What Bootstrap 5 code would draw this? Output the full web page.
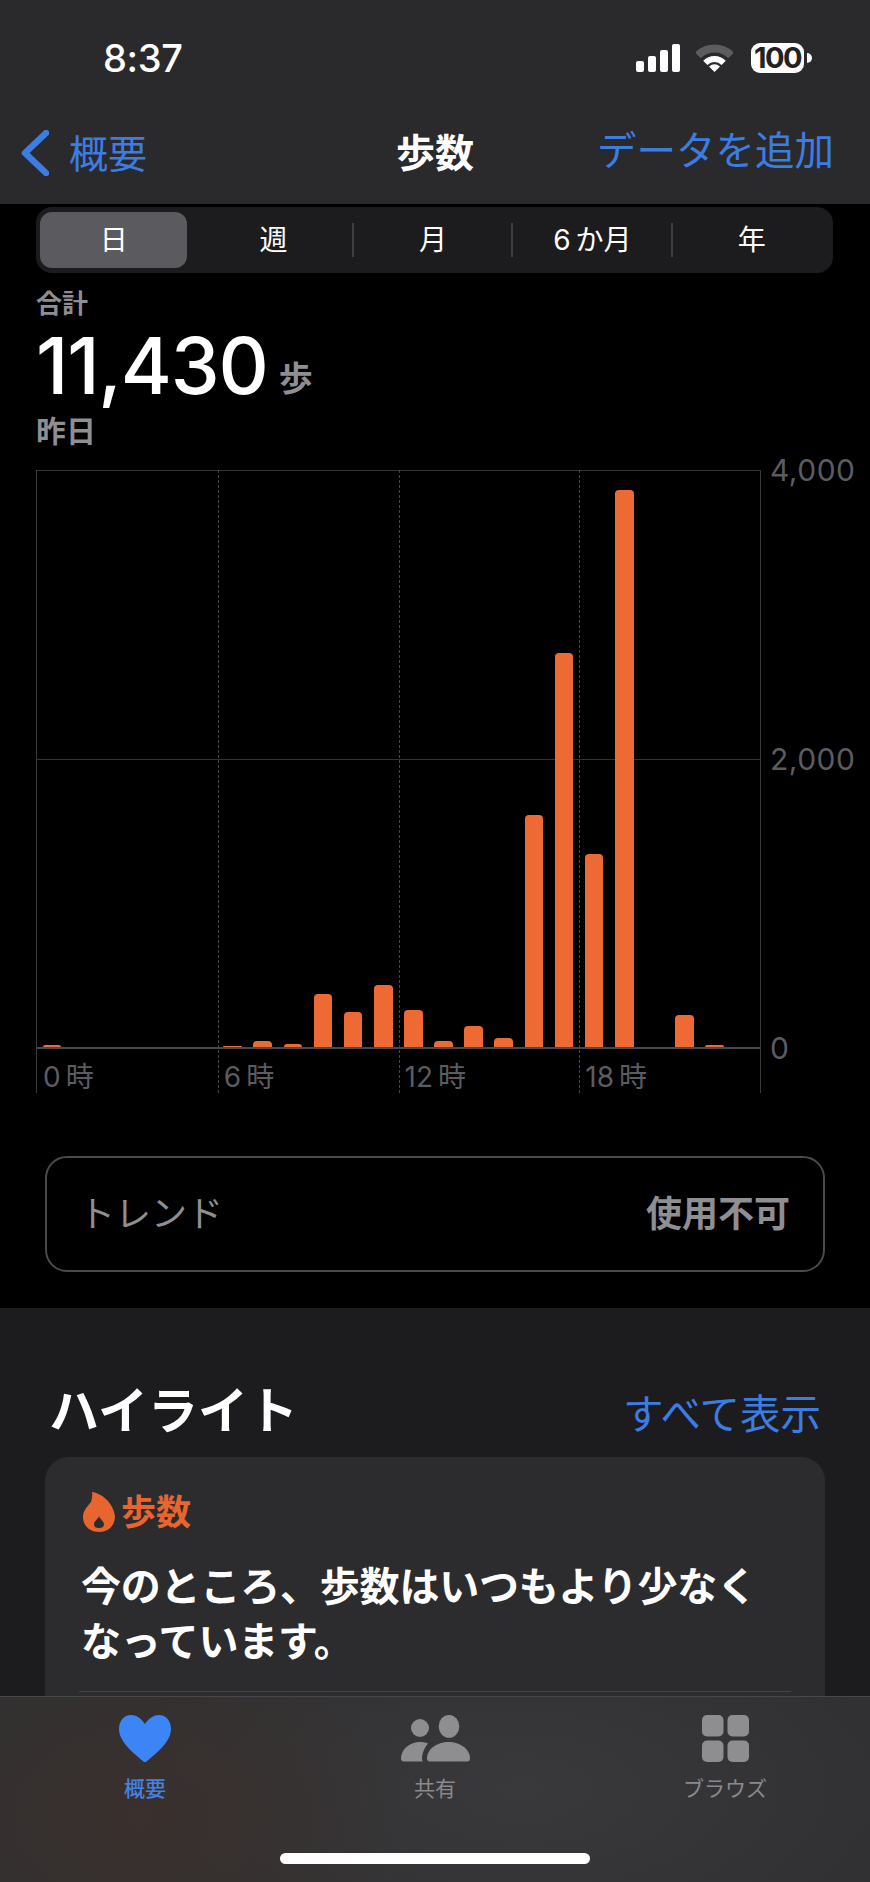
<!DOCTYPE html>
<html lang="ja">
<head>
    <meta charset="UTF-8">
    <meta name="viewport" content="width=device-width, initial-scale=1.0">
    <title>歩数</title>
    <link rel="stylesheet" href="https://cdn.jsdelivr.net/npm/bootstrap@5.3.0/dist/css/bootstrap.min.css">
    <style>
        body { background: #000; font-family: Inter, "Noto Sans CJK JP", sans-serif; color: #fff; }
        .screen { width: 870px; height: 1882px; overflow: hidden; position: relative; background: #000; }

        .top-bar { height: 204px; background: #2a2a2c; }
        .status-row { height: 116px; padding: 0 66px 0 103px; }
        .clock { font-size: 38px; font-weight: 500; letter-spacing: -.3px; line-height: 1; }
        .signal-icon { width: 44px; height: 28px; margin-right: 16px; }
        .wifi-icon { width: 37px; height: 28px; margin-right: 18px; }
        .battery { width: 53px; height: 30px; border-radius: 9px; background: #fff; color: #222; font-size: 29px; font-weight: 700; letter-spacing: -1.5px; line-height: 30px; text-align: center; position: relative; }
        .battery::after { content: ""; position: absolute; right: -8px; top: 10px; width: 5px; height: 10px; background: #fff; border-radius: 0 5px 5px 0; }
        .nav-row { height: 74px; padding: 0 36px 0 20px; position: relative; }
        .nav-back { font-size: 39px; line-height: 1; gap: 20px; color: #3b7de3; }
        .nav-title { position: absolute; left: 0; right: 0; text-align: center; font-size: 39px; font-weight: 700; line-height: 72px; }
        .nav-add { font-size: 39.5px; line-height: 1; color: #3b7de3; position: relative; margin-top: -2px; }

        .segments { margin: 3px 37px 0 36px; height: 66px; border-radius: 16px; background: #1c1c1e; display: grid; grid-template-columns: repeat(5, 1fr); padding: 5px 0; }
        .seg-item { font-size: 28px; line-height: 56px; text-align: center; padding-right: 3px; }
        .seg-item.on { background: #5b5b5f; border-radius: 12px; margin: 0 8px 0 4px; padding: 0; }
        .seg-item.sep { margin-left: -3px; padding-right: 0; background: linear-gradient(#3f3f42, #3f3f42) left center / 2px 34px no-repeat; }

        .summary { padding-left: 36px; }
        .sum-label { margin-top: 16px; font-size: 26px; line-height: 30px; font-weight: 700; color: #8e8e93; }
        .sum-value { font-size: 78px; line-height: 76px; font-weight: 500; letter-spacing: -1.2px; gap: 11px; margin: 9px 0 10px; }
        .sum-unit { font-size: 34px; font-weight: 700; color: #8e8e93; line-height: 1; margin-bottom: 8px; }
        .sum-date { font-size: 30px; line-height: 34px; font-weight: 700; color: #8e8e93; }

        .chart-wrap { margin: 22px 0 0 36px; }
        .plot { width: 725px; position: relative; border: solid #3a3a3c; border-width: 0 1px 0 1px; }
        .plot-area { height: 579px; display: grid; grid-template-columns: repeat(24, 1fr); align-items: end; border-top: 1px solid #333336; border-bottom: 2px solid #48484a; position: relative; }
        .bar-cell { padding: 0 6px 0 5.5px; display: flex; align-items: flex-end; height: 100%; }
        .bar { width: 100%; background: #ee6a34; border-radius: 4px 4px 0 0; position: relative; }
        .mid-line { position: absolute; left: 0; right: 0; top: 288px; border-top: 1px solid #333336; }
        .hour-lines { position: absolute; inset: 0; display: grid; grid-template-columns: repeat(4, 1fr); pointer-events: none; }
        .hour-lines div + div { border-left: 1px dashed #48484a; }
        .hour-labels { height: 44px; display: grid; grid-template-columns: repeat(4, 1fr); }
        .hour-labels div { font-size: 28px; line-height: 44px; padding: 6px 0 0 6px; color: #5c5c60; }
        .y-labels { height: 612px; margin-top: -17px; padding-left: 9px; font-size: 30px; letter-spacing: .5px; line-height: 34px; color: #5c5c60; }

        .trend-card { --bs-card-bg: transparent; --bs-card-border-color: #4a4a4c; --bs-card-border-width: 2px; --bs-card-border-radius: 22px; margin: 63px 45px 0 45px; height: 116px; padding: 0 33px 0 32px; }
        .trend-name { font-size: 36px; color: #8e8e93; font-weight: 400; }
        .trend-val { font-size: 36px; color: #8e8e93; font-weight: 700; }

        .lower { margin-top: 36px; height: 600px; background: #1c1c1e; padding: 73px 45px 0; }
        .lower-title { font-size: 50px; font-weight: 700; line-height: 60px; margin-left: 4px; }
        .lower-link { font-size: 40.5px; line-height: 60px; color: #3b7de3; margin: 4px 4px -4px 0; }
        .highlight-card { --bs-card-bg: #2c2c2e; --bs-card-border-width: 0; --bs-card-border-radius: 24px; margin-top: 16px; height: 300px; padding: 35px 36px 0; }
        .hl-head { gap: 6px; color: #e8652f; font-size: 35px; font-weight: 700; line-height: 40px; }
        .flame { width: 32px; height: 40px; margin-left: 2px; }
        .hl-text { font-size: 40px; font-weight: 700; line-height: 55px; margin: 27px 0 0; letter-spacing: -.2px; }
        .hl-rule { margin: 22px -2px 0; border-top: 1px solid #444446; }

        .tab-bar { position: absolute; left: 0; right: 0; bottom: 0; height: 186px; border-top: 1px solid #48484a; background: radial-gradient(ellipse 280px 200px at 16% 65%, #3a302d 0, rgba(58,48,45,0) 100%), radial-gradient(ellipse 420px 200px at 60% 50%, #39393b 0, rgba(57,57,59,0) 100%), #303032; }
        .tab-items { display: grid; grid-template-columns: repeat(3, 1fr); padding-top: 18px; }
        .tab-item { text-align: center; color: #8a8a8e; font-size: 21px; line-height: 26px; }
        .tab-item svg { display: block; height: 47px; margin: 0 auto 14px; }
        .tab-item.on { color: #4481e2; font-weight: 500; }
        .home-bar { width: 310px; height: 11px; border-radius: 6px; background: #fff; margin: 51px auto 0; }
    </style>
</head>
<body>
<div class="screen">
    <div class="top-bar">
        <div class="status-row d-flex align-items-center justify-content-between">
            <div class="clock">8:37</div>
            <div class="d-flex align-items-center">
                <svg class="signal-icon" viewBox="0 0 44 28" fill="#fff">
                    <rect x="0" y="17" width="8" height="11" rx="2"/>
                    <rect x="12" y="12" width="8" height="16" rx="2"/>
                    <rect x="24" y="6" width="8" height="22" rx="2"/>
                    <rect x="36" y="0" width="8" height="28" rx="2"/>
                </svg>
                <svg class="wifi-icon" viewBox="0 0 37 28">
                    <path d="M1.9 11.4A23.5 23.5 0 0 1 35.1 11.4" fill="none" stroke="#5c5c5e" stroke-width="8"/>
                    <path d="M9.3 18.8A13 13 0 0 1 27.7 18.8" fill="none" stroke="#fff" stroke-width="6"/>
                    <path d="M18.5 28L13 22.5Q18.5 18 24 22.5Z" fill="#fff"/>
                </svg>
                <div class="battery">100</div>
            </div>
        </div>
        <div class="nav-row d-flex align-items-center justify-content-between">
            <div class="nav-title">歩数</div>
            <div class="nav-back d-flex align-items-center">
                <svg width="29" height="46" viewBox="0 0 29 46"><path d="M26 3L5 23L26 43" fill="none" stroke="#3b7de3" stroke-width="6.5" stroke-linecap="round" stroke-linejoin="round"/></svg>
                <span>概要</span>
            </div>
            <div class="nav-add">データを追加</div>
        </div>
    </div>

    <div class="segments">
        <div class="seg-item on">日</div>
        <div class="seg-item">週</div>
        <div class="seg-item sep">月</div>
        <div class="seg-item sep">6&thinsp;か月</div>
        <div class="seg-item sep">年</div>
    </div>

    <div class="summary">
        <div class="sum-label">合計</div>
        <div class="sum-value d-flex align-items-end">11,430 <span class="sum-unit">歩</span></div>
        <div class="sum-date">昨日</div>
    </div>

    <div class="chart-wrap d-flex">
        <div class="plot">
            <div class="plot-area" id="bars">
                <div class="mid-line"></div>
            </div>
            <div class="hour-labels">
                <div>0&thinsp;時</div><div>6&thinsp;時</div><div>12&thinsp;時</div><div>18&thinsp;時</div>
            </div>
            <div class="hour-lines"><div></div><div></div><div></div><div></div></div>
        </div>
        <div class="y-labels d-flex flex-column justify-content-between">
            <div>4,000</div><div>2,000</div><div>0</div>
        </div>
    </div>

    <div class="card trend-card flex-row align-items-center justify-content-between">
        <span class="trend-name">トレンド</span>
        <span class="trend-val">使用不可</span>
    </div>

    <div class="lower">
        <div class="d-flex justify-content-between">
            <div class="lower-title">ハイライト</div>
            <div class="lower-link">すべて表示</div>
        </div>
        <div class="card highlight-card">
            <div class="hl-head d-flex align-items-center">
                <svg class="flame" viewBox="0 0 32 40"><path fill="#e8652f" fill-rule="evenodd" d="M9 0C18 1 30 10 32 24C32 34 25 40 16 40C7 40 0 34 0 25C0 18 5 14 8 10C9 7 9.500 3 9 0ZM16 24C16.500 27 21 29 21 32C21 35 19 36 16 36C13 36 11 35 11 32C11 29 15.500 27 16 24Z"/></svg>
                <span>歩数</span>
            </div>
            <p class="hl-text">今のところ、歩数はいつもより少なく<br>なっています。</p>
            <div class="hl-rule"></div>
        </div>
    </div>

    <div class="tab-bar">
        <div class="tab-items">
            <div class="tab-item on">
                <svg width="52" viewBox="0 0 52 47"><path fill="#3d84f7" d="M26 9C22 3 17 0 12 0C5 0 0 6 0 14C0 26 13 37 24.500 46.500Q26 47.500 27.500 46.500C39 37 52 26 52 14C52 6 47 0 40 0C35 0 30 3 26 9Z"/></svg>
                概要
            </div>
            <div class="tab-item">
                <svg width="69" viewBox="0 0 69 47" fill="#8e8e90">
                    <ellipse cx="48" cy="11.400" rx="10.300" ry="11.400"/>
                    <ellipse cx="19" cy="13" rx="9" ry="9"/>
                    <path d="M29 46.500A3 3 0 0 1 26 43.500C26 34 36 27 47.500 27C59 27 69 34 69 43.500A3 3 0 0 1 66 46.500Z"/>
                    <path d="M3 46.500A3 3 0 0 1 0 43.500C0 34 9 27 19 27C22 27 25 27.500 27 28.500C24 32 21 38 21 43.500C21 45 21.500 46 22 46.500Z"/>
                </svg>
                共有
            </div>
            <div class="tab-item">
                <svg width="47" viewBox="0 0 47 47" fill="#8e8e90">
                    <rect x="0" y="0" width="21.500" height="21.500" rx="5"/>
                    <rect x="25.500" y="0" width="21.500" height="21.500" rx="5"/>
                    <rect x="0" y="25.500" width="21.500" height="21.500" rx="5"/>
                    <rect x="25.500" y="25.500" width="21.500" height="21.500" rx="5"/>
                </svg>
                ブラウズ
            </div>
        </div>
        <div class="home-bar"></div>
    </div>
</div>

<script src="https://cdn.jsdelivr.net/npm/bootstrap@5.3.0/dist/js/bootstrap.bundle.min.js"></script>
<script>
    // bar heights in px, one per hour
    const hours = [2, 0, 0, 0, 0, 0, 1, 6, 3, 53, 35, 62, 37, 6, 21, 9, 232, 394, 193, 557, 0, 32, 2, 0];
    const area = document.getElementById('bars');
    hours.forEach(h => {
        const cell = document.createElement('div');
        cell.className = 'bar-cell';
        if (h) {
            const bar = document.createElement('div');
            bar.className = 'bar';
            bar.style.height = h + 'px';
            cell.appendChild(bar);
        }
        area.appendChild(cell);
    });
</script>
</body>
</html>
